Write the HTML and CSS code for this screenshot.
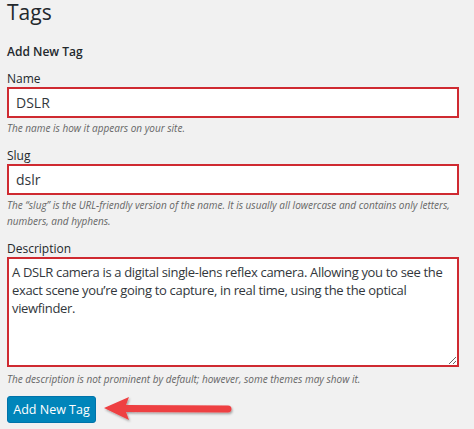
FILE: index.html
```html
<!DOCTYPE html>
<html>
<head>
<meta charset="utf-8">
<link rel="stylesheet" href="styles.css">
</head>
<body>
<div class="wrap">
  <h1 class="title">Tags</h1>
  <h2 class="subtitle">Add New Tag</h2>
  <div class="field">
    <label class="label" for="name">Name</label>
    <input class="input" id="name" type="text" value="DSLR">
    <p class="help">The name is how it appears on your site.</p>
  </div>
  <div class="field">
    <label class="label" for="slug">Slug</label>
    <input class="input" id="slug" type="text" value="dslr">
    <p class="help">The “slug” is the URL-friendly version of the name. It is usually all lowercase and contains only letters, numbers, and hyphens.</p>
  </div>
  <div class="field">
    <label class="label" for="desc">Description</label>
    <textarea class="textarea" id="desc">A DSLR camera is a digital single-lens reflex camera. Allowing you to see the exact scene you’re going to capture, in real time, using the the optical viewfinder.</textarea>
    <p class="help help-last">The description is not prominent by default; however, some themes may show it.</p>
  </div>
  <div class="actions">
    <button class="button">Add New Tag</button>
    <svg class="arrow" width="134" height="28" viewBox="0 0 134 28">
      <defs>
        <filter id="sh" x="-10%" y="-30%" width="120%" height="160%">
          <feDropShadow dx="1" dy="1.5" stdDeviation="1.2" flood-color="#000" flood-opacity="0.35"/>
        </filter>
      </defs>
      <g filter="url(#sh)" fill="#ee3f42">
        <path d="M2 13 L27 2 L24 10 L126 10.5 A3.5 3.5 0 0 1 126 17.5 L24 17 L27 25 Z"/>
      </g>
    </svg>
  </div>
</div>
</body>
</html>
```
FILE: styles.css
```css
html, body {
  margin: 0;
  padding: 0;
  background: #f1f1f1;
}
body {
  font-family: "Open Sans", "Noto Sans", sans-serif;
  color: #23282d;
}
.wrap {
  padding: 0 15px 0 7px;
}
.title {
  margin: 0;
  font-size: 21px;
  font-weight: 400;
  line-height: 24px;
  color: #23282d;
}
.subtitle {
  margin: 21px 0 0;
  font-size: 12px;
  font-weight: 600;
  line-height: 14px;
  color: #23282d;
}
.field {
  display: flex;
  flex-direction: column;
}
.label {
  font-size: 12px;
  line-height: 14px;
  margin-top: 13px;
  margin-bottom: 1px;
  color: #23282d;
}
.input, .textarea {
  box-sizing: border-box;
  width: 452px;
  border: 2px solid #cf2a31;
  background: #fff;
  font-family: "Open Sans", "Noto Sans", sans-serif;
  color: #32373c;
  margin: 0;
  outline: none;
}
.input {
  height: 31px;
  font-size: 14px;
  padding: 0 7px;
}
.textarea {
  height: 110px;
  font-size: 13px;
  letter-spacing: -0.33px;
  line-height: 18px;
  padding: 4px 3px;
  resize: vertical;
}
.help {
  margin: 2px 0 0;
  font-size: 10px;
  line-height: 16px;
  font-style: italic;
  color: #666;
}
.help-last {
  margin-top: 4px;
}
.actions {
  display: flex;
  align-items: center;
  gap: 6px;
  margin-top: 8px;
}
.button {
  width: 89px;
  height: 27px;
  background: #0085ba;
  border: 1px solid #0073aa;
  border-radius: 3px;
  color: #fff;
  font-family: "Open Sans", "Noto Sans", sans-serif;
  font-size: 12.5px;
  padding: 0;
}
.arrow {
  display: block;
}
```
